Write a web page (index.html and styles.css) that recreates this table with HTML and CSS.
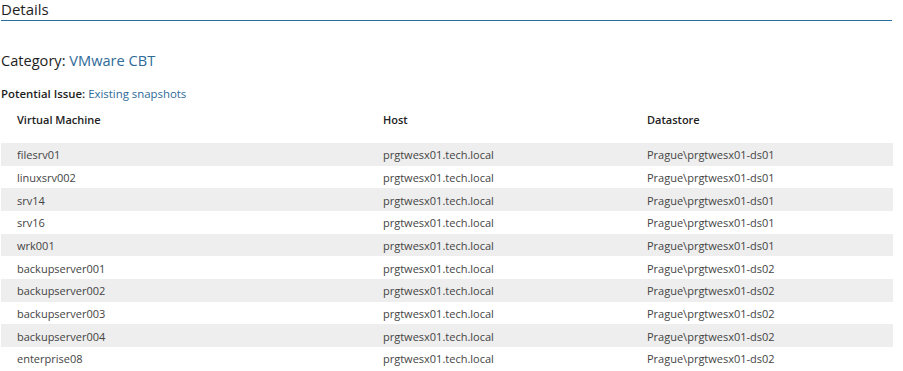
FILE: index.html
```html
<!DOCTYPE html>
<html>
<head>
<meta charset="utf-8">
<link rel="stylesheet" href="styles.css">
</head>
<body>
<div class="page">
  <h2 class="title">Details</h2>
  <h3 class="category">Category: <span class="link">VMware CBT</span></h3>
  <div class="issue">Potential Issue: <span class="link">Existing snapshots</span></div>
  <table class="grid">
    <thead>
      <tr><th class="c1">Virtual Machine</th><th class="c2">Host</th><th class="c3">Datastore</th></tr>
    </thead>
    <tbody>
      <tr><td>filesrv01</td><td>prgtwesx01.tech.local</td><td>Prague\prgtwesx01-ds01</td></tr>
      <tr><td>linuxsrv002</td><td>prgtwesx01.tech.local</td><td>Prague\prgtwesx01-ds01</td></tr>
      <tr><td>srv14</td><td>prgtwesx01.tech.local</td><td>Prague\prgtwesx01-ds01</td></tr>
      <tr><td>srv16</td><td>prgtwesx01.tech.local</td><td>Prague\prgtwesx01-ds01</td></tr>
      <tr><td>wrk001</td><td>prgtwesx01.tech.local</td><td>Prague\prgtwesx01-ds01</td></tr>
      <tr><td>backupserver001</td><td>prgtwesx01.tech.local</td><td>Prague\prgtwesx01-ds02</td></tr>
      <tr><td>backupserver002</td><td>prgtwesx01.tech.local</td><td>Prague\prgtwesx01-ds02</td></tr>
      <tr><td>backupserver003</td><td>prgtwesx01.tech.local</td><td>Prague\prgtwesx01-ds02</td></tr>
      <tr><td>backupserver004</td><td>prgtwesx01.tech.local</td><td>Prague\prgtwesx01-ds02</td></tr>
      <tr><td>enterprise08</td><td>prgtwesx01.tech.local</td><td>Prague\prgtwesx01-ds02</td></tr>
    </tbody>
  </table>
</div>
</body>
</html>
```
FILE: styles.css
```css
html, body {
  margin: 0;
  padding: 0;
  background: #fff;
}
body {
  font-family: "Open Sans", "Noto Sans", sans-serif;
  color: #222;
}
.page {
  width: 891px;
  padding: 0 0 0 1px;
}
.title {
  margin: 0;
  font-size: 15px;
  font-weight: 400;
  line-height: 18px;
  height: 18px;
  padding-bottom: 2px;
  border-bottom: 1px solid #2a6e9c;
  color: #1e1e1e;
}
.category {
  margin: 0;
  padding-top: 29px;
  font-size: 14.6px;
  font-weight: 400;
  line-height: 20px;
  height: 20px;
  color: #1e1e1e;
}
.link {
  color: #2e6a97;
}
.issue {
  margin-top: 16px;
  font-size: 11.4px;
  font-weight: 600;
  line-height: 16px;
  color: #1e1e1e;
}
.issue .link {
  font-weight: 400;
  color: #2e6a97;
}
.grid {
  width: 892px;
  border-collapse: collapse;
  table-layout: fixed;
  font-size: 11px;
}
.grid th {
  text-align: left;
  font-weight: 600;
  color: #222;
  line-height: 22px;
  padding: 7px 0 12px 16px;
  vertical-align: middle;
}
.grid .c1 { width: 350px; }
.grid .c2 { width: 248px; }
.grid td {
  color: #444;
  padding: 1px 0 0 16px;
  height: 21.67px;
  white-space: nowrap;
}
.grid tbody tr:nth-child(odd) {
  background: #eeeeee;
}
```
